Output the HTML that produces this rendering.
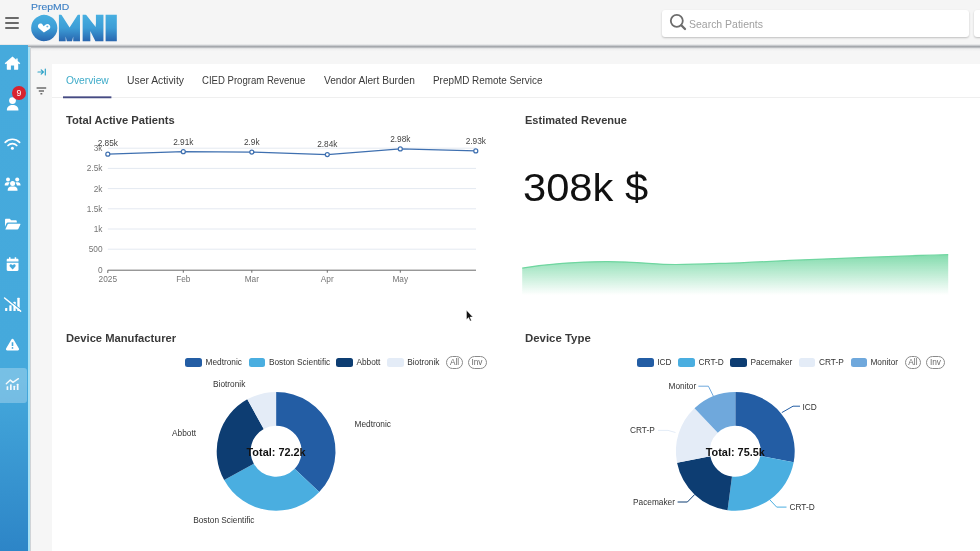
<!DOCTYPE html>
<html lang="en">
<head>
<meta charset="utf-8">
<title>PrepMD OMNI - Overview</title>
<style>
*{box-sizing:border-box;margin:0;padding:0}
html,body{width:980px;height:551px;overflow:hidden}
html{background:#f6f6f6}
#app{position:absolute;left:0;top:0;width:980px;height:551px;will-change:transform}
body{position:relative;font-family:"Liberation Sans",sans-serif;color:#333}
/* header */
#header{position:absolute;left:0;top:0;width:980px;height:45px;background:#f5f5f5}
#hline{position:absolute;left:0;top:44px;width:980px;height:7px;background:linear-gradient(180deg,rgba(246,246,246,0) 0,#d3d5d8 1.200px,#a4a7ac 2.400px,#adb0b4 3.200px,#dfe0e2 4.200px,#eeeeef 5.200px,rgba(246,246,246,0) 7px)}
#burger{position:absolute;left:5.300px;top:16.900px;width:14px;height:13px}
#burger i{display:block;height:2.200px;background:#6a6a6a;margin-bottom:3px;border-radius:1px}
#logo{position:absolute;left:28px;top:12px;width:92px;height:32px}
#search{position:absolute;left:662px;top:10px;width:307px;height:27px;background:#fff;border-radius:3px;box-shadow:0 1px 2px rgba(0,0,0,.22)}
#search svg{position:absolute;left:6px;top:3px;width:20px;height:20px}
#box2{position:absolute;left:974px;top:10px;width:12px;height:27px;background:#fff;border-radius:3px;box-shadow:0 1px 2px rgba(0,0,0,.22)}
/* sidebar */
#side{position:absolute;left:0;top:45px;width:28px;height:506px;background:linear-gradient(180deg,#46aadc 0%,#45a9dc 66%,#2d85c7 100%)}
#sideline{position:absolute;left:27px;top:47px;width:5px;height:504px;background:linear-gradient(90deg,rgba(165,224,245,0) 0,rgba(165,224,245,0) .750px,#a5e0f5 .750px,#a5e0f5 2.600px,#c6cacf 2.600px,#d6d9dc 4px,rgba(246,246,246,0) 4.200px)}
#active{position:absolute;left:-3px;top:323px;width:29.500px;height:35px;border-radius:3px;background:rgba(255,255,255,.27)}
#icons{position:absolute;left:0;top:0;width:28px;height:506px}
#badge{position:absolute;left:12px;top:40.800px;width:13.800px;height:13.800px;border-radius:50%;background:#d8232f;color:#fff;font-size:8.600px;line-height:14.600px;text-align:center}
/* main */
#tools{position:absolute;left:34px;top:64px;width:16px;height:36px}
#card{position:absolute;left:52px;top:64px;width:940px;height:500px;background:#fff}
#tabs{position:absolute;left:0;top:0;width:928px;height:34px;border-bottom:1px solid #efefef}
.t{position:absolute;line-height:1;white-space:nowrap;transform-origin:0 50%;color:#3a3a3a}
svg{display:block}
svg text{font-family:"Liberation Sans",sans-serif}
.chart{position:absolute;left:0;top:0;width:980px;height:551px;pointer-events:none}
.lg{position:absolute;top:356px;height:12px;font-size:8.300px;line-height:12px;color:#333;white-space:nowrap}
.sw{position:absolute;top:357.500px;width:16.600px;height:9px;border-radius:2.500px}
.pill{position:absolute;top:355.700px;height:13px;border:1px solid #8a8a8a;border-radius:7px;font-size:8.300px;line-height:11.200px;text-align:center;color:#6a6a6a}
</style>
</head>
<body>
<div id="app">
<div id="header">
  <div id="burger"><i></i><i></i><i></i></div>
  <div class="t " style="left:31.40px;top:3.00px;font-size:8.6px;transform:scaleX(1.2111);color:#3c7fc4;-webkit-text-stroke:.12px #3c7fc4">PrepMD</div>
  <svg id="logo" viewBox="28 12 92 32">
    <defs>
      <linearGradient id="lgr" x1="0" y1="14" x2="0" y2="42" gradientUnits="userSpaceOnUse">
        <stop offset="0" stop-color="#48b0e1"/><stop offset=".5" stop-color="#3d9dd6"/><stop offset="1" stop-color="#2763ad"/>
      </linearGradient>
    </defs>
    <text y="39" font-size="30.500" font-weight="bold" fill="url(#lgr)" stroke="url(#lgr)" stroke-width="4.300" stroke-linejoin="miter"><tspan x="36" textLength="16" lengthAdjust="spacingAndGlyphs">O</tspan><tspan x="59.050" textLength="20.900" lengthAdjust="spacingAndGlyphs">M</tspan><tspan x="82.870" textLength="20.600" lengthAdjust="spacingAndGlyphs">N</tspan><tspan x="105.760" textLength="10.920" lengthAdjust="spacingAndGlyphs">I</tspan></text>
    <path d="M60.300 13L69.600 27.600L78.900 13ZM84.700 13L95.700 27V13Z" fill="#f5f5f5"/>
    <circle cx="44.250" cy="28" r="13.100" fill="url(#lgr)"/>
    <path d="M43.900 32.600l-5-4.300c-1.400-1.300-1.300-3.400.2-4.300 1.300-.8 2.900-.3 3.700.9l.9 1.400 1.700-1.500c1.300-1.100 3.300-1 4.300.4 1 1.300.7 3.100-.6 4.100z" fill="#fff"/>
    <path d="M47.300 25.500v2M46.300 26.500h2" stroke="#3f9fd7" stroke-width=".6"/>
  </svg>
  <div id="search">
    <svg viewBox="0 0 20 20"><circle cx="8.800" cy="7.800" r="6" fill="none" stroke="#6c6c6c" stroke-width="1.800"/><path d="M13.300 12.300l3.700 3.700" stroke="#6c6c6c" stroke-width="2.300" stroke-linecap="round"/></svg>
  </div>
  <div id="box2"></div>
</div>
<div id="hline"></div>
<div class="t " style="left:688.60px;top:19.00px;font-size:10.6px;transform:scaleX(0.9889);color:#a0a0a0">Search Patients</div>
<div id="side">
  <div id="active"></div>
  <svg id="icons" viewBox="0 45 28 506" fill="#fff">
    <!-- home -->
    <path d="M12.500 56.600l-7.800 6.600 1 1.100 1.100-.9v5.800c0 .3.200.5.500.5h3.600v-4.200h3.200v4.200h3.600c.3 0 .5-.2.500-.5v-5.800l1.100.9 1-1.100-2.600-2.200v-2.400h-1.500v1.100z"/>
    <!-- user -->
    <circle cx="12.500" cy="100.600" r="3.400"/>
    <path d="M6.900 110.400v-.9c0-2.600 2.500-4.600 5.750-4.600s5.750 2 5.750 4.600v.9z"/>
    <!-- wifi -->
    <g fill="none" stroke="#fff" stroke-width="1.700" stroke-linecap="round">
      <path d="M5.200 142.300c4.100-4.100 10.300-4.100 14.400 0"/>
      <path d="M8 145.500c2.500-2.600 6.300-2.600 8.800 0"/>
    </g>
    <circle cx="12.400" cy="148.200" r="1.500"/>
    <!-- users -->
    <circle cx="8" cy="179.500" r="2"/><circle cx="17.200" cy="179.500" r="2"/>
    <path d="M4.700 185.600v-.9c0-1.400 1.100-2.500 2.500-2.500h1.300c.5 0 1 .2 1.400.5-1 .7-1.500 1.700-1.600 2.900zM20.500 185.600v-.9c0-1.400-1.100-2.500-2.500-2.500h-1.300c-.5 0-1 .2-1.400.5 1 .7 1.500 1.700 1.600 2.900z"/>
    <circle cx="12.600" cy="183.400" r="2.500"/>
    <path d="M7.700 190.800v-1.100c0-1.800 1.500-3.300 3.300-3.300h3.200c1.800 0 3.300 1.500 3.300 3.300v1.100z"/>
    <!-- folder open -->
    <path d="M5 219.900c0-.6.500-1.100 1.100-1.100h3.700l1.400 1.400h4.500c.6 0 1.100.5 1.100 1.100v1.200h-8.800c-.7 0-1.300.4-1.600 1l-1.400 3.300z"/>
    <path d="M5.300 229.600l2.400-5.300c.2-.4.500-.6.900-.6h11.200c.5 0 .8.500.6.900l-2.100 4.500c-.2.300-.5.500-.9.500z"/>
    <!-- calendar heart -->
    <path d="M9 257.200h1.500v1.500h4.200v-1.500h1.500v1.500h1.200c.6 0 1.100.5 1.100 1.100v1.800h-11.800v-1.800c0-.6.500-1.100 1.100-1.100h1.200zM6.700 262.800h11.800v7c0 .6-.5 1.100-1.100 1.100h-9.600c-.6 0-1.100-.5-1.100-1.100zM12.600 269.500l2.600-2.700c.6-.7.600-1.700-.1-2.200-.6-.5-1.500-.4-2 .2l-.5.5-.5-.5c-.5-.6-1.400-.7-2-.2-.7.500-.7 1.500-.1 2.200z" fill-rule="evenodd"/>
    <!-- signal slash -->
    <rect x="5.100" y="308" width="2.200" height="3.100" rx=".5"/>
    <rect x="9.300" y="305.300" width="2.300" height="5.800" rx=".5"/>
    <rect x="13.400" y="301.700" width="2.300" height="9.400" rx=".5"/>
    <rect x="17.300" y="297.800" width="2.400" height="13.300" rx=".5"/>
    <path d="M5.300 296.900l16 13.200" stroke="#44a8db" stroke-width="1.100" stroke-linecap="round"/>
    <path d="M4.600 298l16 13.200" stroke="#fff" stroke-width="1.500" stroke-linecap="round"/>
    <!-- warning -->
    <path d="M12.500 338.800c.5 0 .9.300 1.100.7l5.300 9.100c.5.800-.1 1.800-1.100 1.800h-10.600c-1 0-1.600-1-1.100-1.800l5.300-9.100c.2-.4.600-.7 1.100-.7zM11.700 342.300v3.800h1.600v-3.800zM12.500 347c-.5 0-.9.400-.9.900s.4.900.9.900.9-.4.900-.9-.4-.9-.9-.9z" fill-rule="evenodd"/>
    <!-- chart -->
    <g opacity=".92">
    <path d="M6.300 383.700l4-3.600 2.700 2.300 5.400-3.700" fill="none" stroke="#fff" stroke-width="1.400" stroke-linecap="round" stroke-linejoin="round"/>
    <rect x="6.600" y="386.300" width="1.700" height="3.800" rx=".4"/>
    <rect x="10" y="384.300" width="1.700" height="5.800" rx=".4"/>
    <rect x="13.400" y="385.800" width="1.700" height="4.300" rx=".4"/>
    <rect x="16.800" y="383.800" width="1.700" height="6.300" rx=".4"/>
    </g>
  </svg>
  <div id="badge">9</div>
</div>
<div id="sideline"></div>
<svg id="tools" viewBox="34 64 16 36">
  <g fill="none" stroke="#2fa3c8" stroke-width="1.200" stroke-linecap="round" stroke-linejoin="round">
    <path d="M38 72h5.200M41.200 69.800l2.200 2.200-2.200 2.200M45.300 69v6"/>
  </g>
  <g stroke="#6c6c6c" stroke-width="1.500" stroke-linecap="butt">
    <path d="M36.600 88h9.600M38.800 90.900h5.200M40.400 93.700h1.900"/>
  </g>
</svg>
<div id="card">
  <div id="tabs"></div>
</div>
<div class="t " style="left:66.10px;top:76.00px;font-size:10.2px;transform:scaleX(1.0069);color:#3eabc9">Overview</div>
<div class="t " style="left:127.20px;top:76.00px;font-size:10.2px;transform:scaleX(1.0159);">User Activity</div>
<div class="t " style="left:202.30px;top:76.00px;font-size:10.2px;transform:scaleX(0.9402);">CIED Program Revenue</div>
<div class="t " style="left:324.40px;top:76.00px;font-size:10.2px;transform:scaleX(0.9967);">Vendor Alert Burden</div>
<div class="t " style="left:433.20px;top:76.00px;font-size:10.2px;transform:scaleX(0.9716);">PrepMD Remote Service</div>
<div class="t " style="left:66.20px;top:116.00px;font-size:10.3px;font-weight:bold;transform:scaleX(1.0862);">Total Active Patients</div>
<div class="t " style="left:524.50px;top:116.00px;font-size:10.3px;font-weight:bold;transform:scaleX(1.0734);">Estimated Revenue</div>
<div class="t " style="left:66.20px;top:334.00px;font-size:10.3px;font-weight:bold;transform:scaleX(1.0866);">Device Manufacturer</div>
<div class="t " style="left:524.50px;top:334.00px;font-size:10.3px;font-weight:bold;transform:scaleX(1.1087);">Device Type</div>
<div class="t " style="left:523.40px;top:169.00px;font-size:38.4px;transform:scaleX(1.0859);color:#111">308k $</div>
<svg class="chart" viewBox="0 0 980 551">
  <rect x="63" y="96.350" width="48.400" height="1.900" fill="#464b83"/>
  <g stroke="#e4e9f1" stroke-width="1">
    <path d="M107.800 148.200H476M107.800 168.400H476M107.800 188.600H476M107.800 208.800H476M107.800 229H476M107.800 249.200H476"/>
  </g>
  <path d="M107.800 273V270.200H476" fill="none" stroke="#6b6b6b" stroke-width="1"/>
  <path d="M183.300 270.200v2.500M251.800 270.200v2.500M327.300 270.200v2.500M400.300 270.200v2.500" stroke="#6b6b6b" stroke-width="1"/>
  <g font-size="8.300" fill="#757575" text-anchor="end">
    <text x="102.500" y="151.200">3k</text>
    <text x="102.500" y="171.400">2.5k</text>
    <text x="102.500" y="191.600">2k</text>
    <text x="102.500" y="211.800">1.5k</text>
    <text x="102.500" y="232">1k</text>
    <text x="102.500" y="252.200">500</text>
    <text x="102.500" y="272.500">0</text>
  </g>
  <g font-size="8.300" fill="#757575" text-anchor="middle">
    <text x="107.800" y="282.300">2025</text>
    <text x="183.300" y="282.300">Feb</text>
    <text x="251.800" y="282.300">Mar</text>
    <text x="327.300" y="282.300">Apr</text>
    <text x="400.300" y="282.300">May</text>
  </g>
  <path d="M107.800 154.200L183.300 151.700L251.800 152.100L327.300 154.600L400.300 148.900L475.800 150.900" fill="none" stroke="#3f70b0" stroke-width="1.350" stroke-linejoin="round"/>
  <g fill="#fff" stroke="#3f70b0" stroke-width="1.200">
    <circle cx="107.800" cy="154.200" r="2"/><circle cx="183.300" cy="151.700" r="2"/><circle cx="251.800" cy="152.100" r="2"/>
    <circle cx="327.300" cy="154.600" r="2"/><circle cx="400.300" cy="148.900" r="2"/><circle cx="475.800" cy="150.900" r="2"/>
  </g>
  <g font-size="8.300" fill="#444" text-anchor="middle">
    <text x="107.800" y="146.2">2.85k</text>
    <text x="183.300" y="144.5">2.91k</text>
    <text x="251.800" y="144.9">2.9k</text>
    <text x="327.300" y="147.3">2.84k</text>
    <text x="400.300" y="142.3">2.98k</text>
    <text x="475.800" y="144.1">2.93k</text>
  </g>
</svg>
<svg class="chart" viewBox="0 0 980 551">
  <defs>
    <linearGradient id="gg" x1="0" y1="255" x2="0" y2="295" gradientUnits="userSpaceOnUse">
      <stop offset="0" stop-color="#6fd6a0" stop-opacity=".85"/>
      <stop offset="1" stop-color="#6fd6a0" stop-opacity="0"/>
    </linearGradient>
  </defs>
  <path d="M522.200 268.200C550 263.500 580 261.500 608 261.600C640 261.800 655 264.600 676 264.500C700 264.400 720 263.300 740 262.800C800 260 880 256.500 948.200 254.700V295H522.200Z" fill="url(#gg)"/>
  <path d="M522.200 268.200C550 263.500 580 261.500 608 261.600C640 261.800 655 264.600 676 264.500C700 264.400 720 263.300 740 262.800C800 260 880 256.500 948.200 254.700" fill="none" stroke="#6fd6a0" stroke-width="1.200"/>
</svg>
<div class="sw" style="left:185px;background:#235da4"></div><div class="lg" style="left:205.500px">Medtronic</div>
<div class="sw" style="left:248.600px;background:#4aaee0"></div><div class="lg" style="left:268.900px">Boston Scientific</div>
<div class="sw" style="left:336.200px;background:#0d3d72"></div><div class="lg" style="left:356.400px">Abbott</div>
<div class="sw" style="left:387.300px;background:#e4ecf7"></div><div class="lg" style="left:407.200px">Biotronik</div>
<div class="pill" style="left:446.300px;width:16.600px">All</div>
<div class="pill" style="left:467.500px;width:19px">Inv</div>
<svg class="chart" viewBox="0 0 980 551">
    <path d="M276.10 391.90A59.4 59.4 0 0 1 319.26 492.11L294.63 468.82A25.5 25.5 0 0 0 276.10 425.80Z" fill="#235da4"/>
    <path d="M319.26 492.11A59.4 59.4 0 0 1 224.15 480.10L253.80 463.66A25.5 25.5 0 0 0 294.63 468.82Z" fill="#4aaee0"/>
    <path d="M224.15 480.10A59.4 59.4 0 0 1 247.30 399.35L263.74 429.00A25.5 25.5 0 0 0 253.80 463.66Z" fill="#0d3d72"/>
    <path d="M247.30 399.35A59.4 59.4 0 0 1 276.10 391.90L276.10 425.80A25.5 25.5 0 0 0 263.74 429.00Z" fill="#e4ecf7"/>
  <g font-size="8.300" fill="#333">
    <text x="354.500" y="426.600">Medtronic</text>
    <text x="193.200" y="523">Boston Scientific</text>
    <text x="172" y="435.800">Abbott</text>
    <text x="213" y="386.500">Biotronik</text>
  </g>
  <text x="276.100" y="455.800" font-size="10.900" font-weight="bold" fill="#111" text-anchor="middle">Total: 72.2k</text>
</svg>
<div class="sw" style="left:637.300px;background:#235da4"></div><div class="lg" style="left:657.200px">ICD</div>
<div class="sw" style="left:678.100px;background:#4aaee0"></div><div class="lg" style="left:698.600px">CRT-D</div>
<div class="sw" style="left:730.100px;background:#0d3d72"></div><div class="lg" style="left:750.400px">Pacemaker</div>
<div class="sw" style="left:798.500px;background:#e4ecf7"></div><div class="lg" style="left:819px">CRT-P</div>
<div class="sw" style="left:850.500px;background:#6fa8dc"></div><div class="lg" style="left:870.400px">Monitor</div>
<div class="pill" style="left:904.600px;width:16.600px">All</div>
<div class="pill" style="left:926.200px;width:18.500px">Inv</div>
<svg class="chart" viewBox="0 0 980 551">
    <path d="M735.30 391.90A59.4 59.4 0 0 1 793.67 462.33L760.36 456.03A25.5 25.5 0 0 0 735.30 425.80Z" fill="#235da4"/>
    <path d="M793.67 462.33A59.4 59.4 0 0 1 727.55 510.19L731.97 476.58A25.5 25.5 0 0 0 760.36 456.03Z" fill="#4aaee0"/>
    <path d="M727.55 510.19A59.4 59.4 0 0 1 677.03 462.84L710.29 456.25A25.5 25.5 0 0 0 731.97 476.58Z" fill="#0d3d72"/>
    <path d="M677.03 462.84A59.4 59.4 0 0 1 694.49 408.14L717.78 432.77A25.5 25.5 0 0 0 710.29 456.25Z" fill="#e4ecf7"/>
    <path d="M694.49 408.14A59.4 59.4 0 0 1 735.30 391.90L735.30 425.80A25.5 25.5 0 0 0 717.78 432.77Z" fill="#6fa8dc"/>
  <g fill="none" stroke-width="1">
    <path d="M781.800 412.600L793 406.200H800" stroke="#235da4"/>
    <path d="M769.800 499.800L776.700 507.100H786.500" stroke="#4aaee0"/>
    <path d="M694.600 494.600L687.400 502H677.600" stroke="#0d3d72"/>
    <path d="M675.500 432.500L668 430.400H658" stroke="#e4ecf7"/>
    <path d="M713.300 396L708.400 386.200H698.400" stroke="#6fa8dc"/>
  </g>
  <g font-size="8.300" fill="#333">
    <text x="802.500" y="410">ICD</text>
    <text x="789.500" y="509.700">CRT-D</text>
    <text x="633" y="505">Pacemaker</text>
    <text x="630" y="433.100">CRT-P</text>
    <text x="668.500" y="389">Monitor</text>
  </g>
  <text x="735.300" y="455.800" font-size="10.900" font-weight="bold" fill="#111" text-anchor="middle">Total: 75.5k</text>
</svg>
<svg class="chart" viewBox="0 0 980 551">
  <path d="M466.500 310.300v9.300l2.100-2 1.500 3.500 1.300-.6-1.500-3.400h2.900z" fill="#111" stroke="#fff" stroke-width=".4"/>
</svg>
</div>
</body>
</html>
